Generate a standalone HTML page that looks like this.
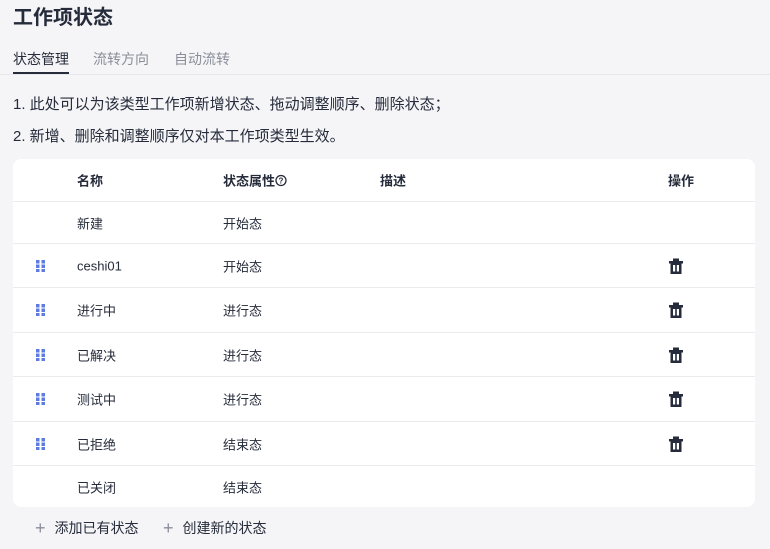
<!DOCTYPE html>
<html><head><meta charset="utf-8"><style>
*{margin:0;padding:0;box-sizing:border-box}
body{width:770px;height:549px;background:#f5f5f7;font-family:"Liberation Sans","Noto Sans CJK SC",sans-serif;color:#252b3a;position:relative;overflow:hidden}
.a{position:absolute;white-space:nowrap}
.title{left:13px;top:6px;font-size:20px;font-weight:bold;line-height:24px}
.tab{top:49px;font-size:14px;line-height:20px;color:#8a8e99}
.line{left:0;top:74px;width:770px;height:1px;background:#e8e8ec}
.ul{left:13px;top:72px;width:56px;height:2px;background:#252b3a}
.tip{left:13px;font-size:15px;line-height:20px;color:#252b3a}
.card{left:13px;top:159px;width:742px;height:348px;background:#fff;border-radius:8px}
.row{position:absolute;left:0;width:742px;border-top:1px solid #ebebee;font-size:13px}
.row span{position:absolute;top:50%;transform:translateY(-50%)}
.row svg{display:block}
.h span{font-weight:bold}
.drag{left:23px}
.trash{left:655px}
.add{top:518px;font-size:14px;line-height:20px;color:#252b3a}
.add b{font-weight:normal;color:#8a8e99;font-size:18px;margin-right:9px;vertical-align:-1px}
</style></head><body>
<div class="a title">工作项状态</div>
<div class="a tab" style="left:13px;color:#252b3a">状态管理</div>
<div class="a tab" style="left:93px">流转方向</div>
<div class="a tab" style="left:174px">自动流转</div>
<div class="a line"></div><div class="a ul"></div>
<div class="a tip" style="top:95px">1. 此处可以为该类型工作项新增状态、拖动调整顺序、删除状态；</div>
<div class="a tip" style="top:127px">2. 新增、删除和调整顺序仅对本工作项类型生效。</div>
<div class="a card">
 <div class="row h" style="top:0;height:42px;border-top:none"><span style="left:64px">名称</span><span style="left:210px;display:flex;align-items:center">状态属性<svg width="12" height="12" viewBox="0 0 12 12"><circle cx="6" cy="6" r="5" fill="none" stroke="#252b3a" stroke-width="1.3"/><text x="6" y="9" font-size="8" text-anchor="middle" font-weight="bold" fill="#252b3a" font-family="Liberation Sans">?</text></svg></span><span style="left:367px">描述</span><span style="left:655px">操作</span></div>
 <div class="row" style="top:42px;height:42px"><span style="left:64px">新建</span><span style="left:210px">开始态</span></div>
 <div class="row" style="top:84px;height:44px"><span class="drag"><svg width="9" height="12"><g fill="#5e7ce0"><rect x="0" y="0" width="3.5" height="3.5"/><rect x="5.5" y="0" width="3.5" height="3.5"/><rect x="0" y="4.5" width="3.5" height="3.5"/><rect x="5.5" y="4.5" width="3.5" height="3.5"/><rect x="0" y="9" width="3.5" height="3"/><rect x="5.5" y="9" width="3.5" height="3"/></g></svg></span><span style="left:64px">ceshi01</span><span style="left:210px">开始态</span><span class="trash"><svg width="16" height="16" viewBox="0 0 16 16"><rect x="5" y="0.5" width="6" height="2.5" fill="#252b3a"/><rect x="1" y="3" width="14" height="2.5" fill="#252b3a"/><rect x="2.5" y="5" width="11" height="11" fill="#252b3a"/><rect x="5" y="7" width="6" height="6.5" fill="#fff"/><rect x="7.2" y="7" width="1.6" height="6.5" fill="#252b3a"/></svg></span></div>
 <div class="row" style="top:128px;height:45px"><span class="drag"><svg width="9" height="12"><g fill="#5e7ce0"><rect x="0" y="0" width="3.5" height="3.5"/><rect x="5.5" y="0" width="3.5" height="3.5"/><rect x="0" y="4.5" width="3.5" height="3.5"/><rect x="5.5" y="4.5" width="3.5" height="3.5"/><rect x="0" y="9" width="3.5" height="3"/><rect x="5.5" y="9" width="3.5" height="3"/></g></svg></span><span style="left:64px">进行中</span><span style="left:210px">进行态</span><span class="trash"><svg width="16" height="16" viewBox="0 0 16 16"><rect x="5" y="0.5" width="6" height="2.5" fill="#252b3a"/><rect x="1" y="3" width="14" height="2.5" fill="#252b3a"/><rect x="2.5" y="5" width="11" height="11" fill="#252b3a"/><rect x="5" y="7" width="6" height="6.5" fill="#fff"/><rect x="7.2" y="7" width="1.6" height="6.5" fill="#252b3a"/></svg></span></div>
 <div class="row" style="top:173px;height:44px"><span class="drag"><svg width="9" height="12"><g fill="#5e7ce0"><rect x="0" y="0" width="3.5" height="3.5"/><rect x="5.5" y="0" width="3.5" height="3.5"/><rect x="0" y="4.5" width="3.5" height="3.5"/><rect x="5.5" y="4.5" width="3.5" height="3.5"/><rect x="0" y="9" width="3.5" height="3"/><rect x="5.5" y="9" width="3.5" height="3"/></g></svg></span><span style="left:64px">已解决</span><span style="left:210px">进行态</span><span class="trash"><svg width="16" height="16" viewBox="0 0 16 16"><rect x="5" y="0.5" width="6" height="2.5" fill="#252b3a"/><rect x="1" y="3" width="14" height="2.5" fill="#252b3a"/><rect x="2.5" y="5" width="11" height="11" fill="#252b3a"/><rect x="5" y="7" width="6" height="6.5" fill="#fff"/><rect x="7.2" y="7" width="1.6" height="6.5" fill="#252b3a"/></svg></span></div>
 <div class="row" style="top:217px;height:45px"><span class="drag"><svg width="9" height="12"><g fill="#5e7ce0"><rect x="0" y="0" width="3.5" height="3.5"/><rect x="5.5" y="0" width="3.5" height="3.5"/><rect x="0" y="4.5" width="3.5" height="3.5"/><rect x="5.5" y="4.5" width="3.5" height="3.5"/><rect x="0" y="9" width="3.5" height="3"/><rect x="5.5" y="9" width="3.5" height="3"/></g></svg></span><span style="left:64px">测试中</span><span style="left:210px">进行态</span><span class="trash"><svg width="16" height="16" viewBox="0 0 16 16"><rect x="5" y="0.5" width="6" height="2.5" fill="#252b3a"/><rect x="1" y="3" width="14" height="2.5" fill="#252b3a"/><rect x="2.5" y="5" width="11" height="11" fill="#252b3a"/><rect x="5" y="7" width="6" height="6.5" fill="#fff"/><rect x="7.2" y="7" width="1.6" height="6.5" fill="#252b3a"/></svg></span></div>
 <div class="row" style="top:262px;height:44px"><span class="drag"><svg width="9" height="12"><g fill="#5e7ce0"><rect x="0" y="0" width="3.5" height="3.5"/><rect x="5.5" y="0" width="3.5" height="3.5"/><rect x="0" y="4.5" width="3.5" height="3.5"/><rect x="5.5" y="4.5" width="3.5" height="3.5"/><rect x="0" y="9" width="3.5" height="3"/><rect x="5.5" y="9" width="3.5" height="3"/></g></svg></span><span style="left:64px">已拒绝</span><span style="left:210px">结束态</span><span class="trash"><svg width="16" height="16" viewBox="0 0 16 16"><rect x="5" y="0.5" width="6" height="2.5" fill="#252b3a"/><rect x="1" y="3" width="14" height="2.5" fill="#252b3a"/><rect x="2.5" y="5" width="11" height="11" fill="#252b3a"/><rect x="5" y="7" width="6" height="6.5" fill="#fff"/><rect x="7.2" y="7" width="1.6" height="6.5" fill="#252b3a"/></svg></span></div>
 <div class="row" style="top:306px;height:42px"><span style="left:64px">已关闭</span><span style="left:210px">结束态</span></div>
</div>
<div class="a add" style="left:35px"><b>+</b>添加已有状态</div>
<div class="a add" style="left:163px"><b>+</b>创建新的状态</div>
</body></html>
